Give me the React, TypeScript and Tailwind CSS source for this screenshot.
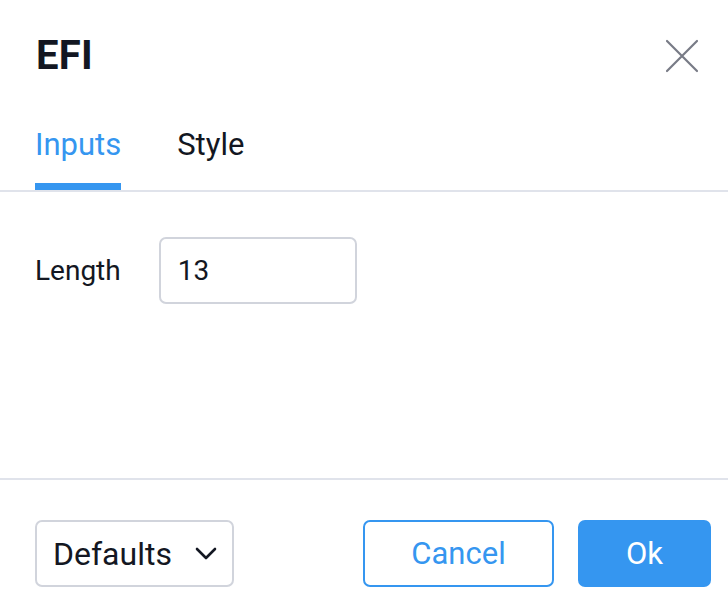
import React from "react";

export default function App() {
  return (
    <div
      className="w-[728px] h-[610px] bg-white flex flex-col text-[#131722]"
      style={{ fontFamily: "Roboto, 'Noto Sans', sans-serif" }}
    >
      {/* Header */}
      <div className="h-[112px] flex items-center justify-between pl-[36px] pr-[29px]">
        <h1 className="text-[40px] font-bold leading-none tracking-[0.3px]">EFI</h1>
        <button className="w-[34px] h-[34px] flex items-center justify-center text-[#787b86]">
          <svg width="34" height="34" viewBox="0 0 34 34" fill="none" stroke="currentColor" strokeWidth="2.2" strokeLinecap="round">
            <path d="M2 2 L32 32 M32 2 L2 32" />
          </svg>
        </button>
      </div>

      {/* Tabs */}
      <div className="border-b-2 border-[#e0e3eb] flex gap-[56px] px-[35px]">
        <div className="flex flex-col items-stretch">
          <span className="text-[31px] leading-none text-[#3596f0] pt-[17px] pb-[23px]">Inputs</span>
          <div className="h-[7px] bg-[#3596f0]" />
        </div>
        <div className="flex flex-col">
          <span className="text-[31px] leading-none pt-[17px] pb-[23px]">Style</span>
        </div>
      </div>

      {/* Content */}
      <div className="flex-1 px-[35px] pt-[45px]">
        <div className="flex items-center gap-[38px]">
          <span className="text-[28px] leading-none">Length</span>
          <div className="w-[198px] h-[67px] border-2 border-[#d1d4dc] rounded-[7px] flex items-center pl-[17px]">
            <span className="text-[28px] leading-none">13</span>
          </div>
        </div>
      </div>

      {/* Footer */}
      <div className="border-t-2 border-[#e0e3eb] h-[132px] flex items-start pt-[40px] px-[35px]">
        <div className="w-[199px] h-[67px] border-2 border-[#d1d4dc] rounded-[7px] flex items-center justify-between pl-[16px] pr-[15px]">
          <span className="text-[32px] leading-none">Defaults</span>
          <svg width="22" height="13" viewBox="0 0 22 13" fill="none" stroke="#131722" strokeWidth="2.6" strokeLinecap="round" strokeLinejoin="round">
            <path d="M2 2 L11 11 L20 2" />
          </svg>
        </div>
        <div className="flex-1" />
        <button className="w-[191px] h-[67px] border-2 border-[#3596f0] rounded-[7px] text-[#3596f0] text-[31px] leading-none flex items-center justify-center">
          Cancel
        </button>
        <button className="ml-[24px] mr-[-18px] w-[133px] h-[67px] bg-[#3596f0] rounded-[7px] text-white text-[31px] leading-none flex items-center justify-center">
          Ok
        </button>
      </div>
    </div>
  );
}
